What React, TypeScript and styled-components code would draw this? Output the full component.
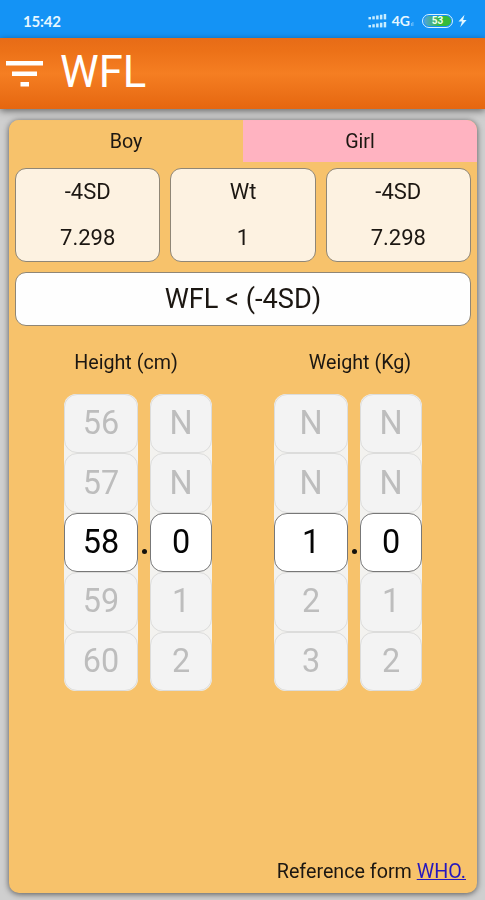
import React from "react";
import styled, { createGlobalStyle } from "styled-components";

const GlobalStyle = createGlobalStyle`
  * { box-sizing: border-box; }
  body { margin: 0; background: #cfcfcf; font-family: Roboto, "Liberation Sans", sans-serif; color: #1c1712; }
`;

const Screen = styled.div`
  display: flex;
  flex-direction: column;
  width: 485px;
  height: 900px;
  overflow: hidden;
  background: #cfcfcf;
`;

const StatusBar = styled.div`
  flex: none;
  display: flex;
  align-items: center;
  justify-content: space-between;
  height: 38px;
  padding: 3px 18px 0 23px;
  background: #1493f5;
  color: #e6f7ff;
`;

const Clock = styled.span`
  font: 700 15px/20px Lato, sans-serif;
  letter-spacing: -0.2px;
`;

const StatusIcons = styled.div`
  display: flex;
  align-items: center;
`;

const Network = styled.span`
  margin-left: 5px;
  font: 700 14px/20px Lato, sans-serif;
`;

const NetworkTail = styled.span`
  margin: 6px 6px 0 1px;
  width: 5px;
  font: 700 5px/6px Roboto, sans-serif;
  opacity: 0.55;
`;

const Battery = styled.span`
  width: 31px;
  height: 14px;
  margin-right: 5px;
  padding: 1px;
  border: 1.5px solid #d5f2ff;
  border-radius: 7px;
`;

const Charge = styled.span`
  display: block;
  height: 100%;
  border-radius: 5px;
  background: linear-gradient(90deg, #4fa3dc 0%, #45b27a 35%, #35bb3b 60%);
  color: #f0fff0;
  font: 700 10px/10px Roboto, sans-serif;
  text-align: center;
`;

const TitleBar = styled.header`
  flex: none;
  z-index: 1;
  display: flex;
  align-items: center;
  height: 71px;
  padding-left: 6px;
  background: linear-gradient(180deg, #e76c17 0%, #ec7118 18%, #f57e22 50%, #ec7118 78%, #e6660f 100%);
  box-shadow: 0 2px 7px rgba(0, 0, 0, 0.5);
`;

const Title = styled.h1`
  margin: 0 0 2px 17px;
  color: #fff;
  font-size: 43.6px;
  font-weight: 400;
  line-height: 69px;
`;

const Card = styled.main`
  flex: none;
  display: flex;
  flex-direction: column;
  width: 468px;
  height: 773px;
  margin: 11px 0 0 9px;
  overflow: hidden;
  border-radius: 10px;
  background: #f7c26b;
`;

const CardShadow = styled.div`
  display: flex;
  filter: drop-shadow(0 1px 3px rgba(0, 0, 0, 0.6));
`;

const Tabs = styled.div`
  display: flex;
  height: 42px;
`;

const Tab = styled.div<{ $color: string }>`
  flex: 1;
  background: ${(p) => p.$color};
  font-size: 19.7px;
  line-height: 43px;
  text-align: center;
`;

const Stats = styled.div`
  display: flex;
  gap: 10px;
  padding: 6px 6px 0;
`;

const Stat = styled.div`
  flex: 1;
  height: 94px;
  border: 1px solid #8f8676;
  border-radius: 11px;
  background: #fdf2e1;
  font-size: 22px;
  line-height: 46px;
  text-align: center;
`;

const Result = styled.div`
  height: 54px;
  margin: 10px 6px 0;
  border: 1px solid #8f8676;
  border-radius: 11px;
  background: #fefefe;
  font-size: 27.2px;
  line-height: 53px;
  text-align: center;
`;

const Labels = styled.div`
  display: flex;
  margin-top: 24px;
`;

const Label = styled.div`
  flex: 1;
  font-size: 19.7px;
  line-height: 26px;
  text-align: center;
`;

const Pickers = styled.div`
  display: flex;
  justify-content: center;
  gap: 62px;
  margin-top: 18px;
`;

const Picker = styled.div`
  display: flex;
`;

const Wheel = styled.div<{ $width: number }>`
  width: ${(p) => p.$width}px;
  height: 297px;
  display: grid;
  grid-template-rows: repeat(5, 1fr);
  border-radius: 12px;
  background: #f3f2ef;
`;

const Cell = styled.div<{ $selected: boolean }>`
  display: flex;
  align-items: center;
  justify-content: center;
  border: 1px solid ${(p) => (p.$selected ? "#777" : "#dcdcdb")};
  border-radius: 13px;
  background: ${(p) => (p.$selected ? "#fff" : "#f3f3f3")};
  color: ${(p) => (p.$selected ? "#050505" : "#bdbdbd")};
  font-size: 32.4px;
  line-height: 38px;
  padding-bottom: 1px;
`;

const Point = styled.div`
  width: 12px;
  display: flex;
  justify-content: center;
  padding-top: 155px;

  &::before {
    content: "";
    width: 5px;
    height: 5px;
    border-radius: 50%;
    background: #15110c;
  }
`;

const Reference = styled.footer`
  margin: auto 11px 8px 0;
  font-size: 19.7px;
  line-height: 27px;
  text-align: right;
`;

const Source = styled.a`
  color: #2617bd;
  text-decoration: underline;
`;

const SignalIcon = () => {
  const bars = [0, 1, 2, 3, 4];
  return (
    <svg width="19" height="15" viewBox="0 0 19 15" fill="#c9edff">
      {bars.map((i) => (
        <React.Fragment key={i}>
          <rect x={0.5 + i * 3.8} y={4 - i * 0.75} width="2.5" height={2.4 + i * 0.75} />
          <rect x={0.5 + i * 3.8} y={12 - i * 0.75} width="2.5" height={2.4 + i * 0.75} />
        </React.Fragment>
      ))}
    </svg>
  );
};

const BoltIcon = () => (
  <svg width="9" height="14" viewBox="0 0 9 14" fill="#e2f7ff">
    <path d="M6.5 0.8 0.5 7.6H4L2.2 13.3 8.6 5.9H5.1Z" />
  </svg>
);

const FilterIcon = () => (
  <svg width="37" height="26" viewBox="0 0 37 26" fill="#fff">
    <path d="M0 0H37V4.5H0ZM6 10.5H31V15H6ZM14.5 21H23V25.5H14.5Z" />
  </svg>
);

const stats = [
  { name: "-4SD", value: "7.298" },
  { name: "Wt", value: "1" },
  { name: "-4SD", value: "7.298" },
];

const pickers = [
  { whole: ["56", "57", "58", "59", "60"], tenth: ["N", "N", "0", "1", "2"] },
  { whole: ["N", "N", "1", "2", "3"], tenth: ["N", "N", "0", "1", "2"] },
];

const NumberWheel = ({ values, width }: { values: string[]; width: number }) => (
  <Wheel $width={width}>
    {values.map((value, i) => (
      <Cell key={i} $selected={i === 2}>{value}</Cell>
    ))}
  </Wheel>
);

export default function App() {
  return (
    <Screen>
      <GlobalStyle />
      <StatusBar>
        <Clock>15:42</Clock>
        <StatusIcons>
          <SignalIcon />
          <Network>4G</Network>
          <NetworkTail>ıl</NetworkTail>
          <Battery>
            <Charge>53</Charge>
          </Battery>
          <BoltIcon />
        </StatusIcons>
      </StatusBar>
      <TitleBar>
        <FilterIcon />
        <Title>WFL</Title>
      </TitleBar>
      <CardShadow>
        <Card>
          <Tabs>
            <Tab $color="#f7c26b">Boy</Tab>
            <Tab $color="#ffb3c1">Girl</Tab>
          </Tabs>
          <Stats>
            {stats.map((s, i) => (
              <Stat key={i}>
                <div>{s.name}</div>
                <div>{s.value}</div>
              </Stat>
            ))}
          </Stats>
          <Result>WFL &lt; (-4SD)</Result>
          <Labels>
            <Label>Height (cm)</Label>
            <Label>Weight (Kg)</Label>
          </Labels>
          <Pickers>
            {pickers.map((p, i) => (
              <Picker key={i}>
                <NumberWheel values={p.whole} width={74} />
                <Point />
                <NumberWheel values={p.tenth} width={62} />
              </Picker>
            ))}
          </Pickers>
          <Reference>
            Reference form <Source href="#">WHO.</Source>
          </Reference>
        </Card>
      </CardShadow>
    </Screen>
  );
}
